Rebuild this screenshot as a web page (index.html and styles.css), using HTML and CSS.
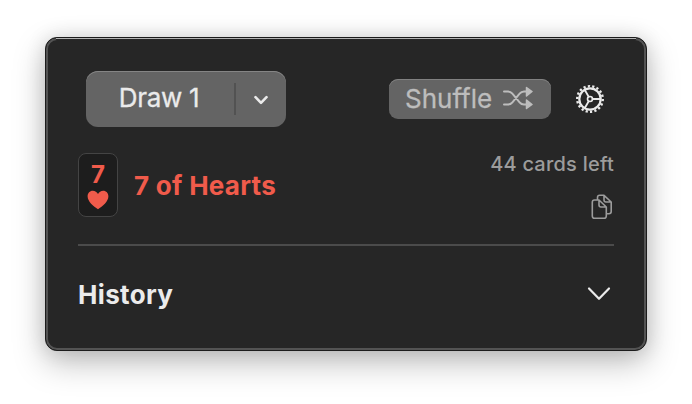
FILE: index.html
```html
<!DOCTYPE html>
<html lang="en">
<head>
<meta charset="utf-8">
<title>Cards</title>
<link rel="stylesheet" href="styles.css">
</head>
<body>
<main class="panel">
  <header class="toolbar">
    <div class="split">
      <button class="draw"><span>Draw 1</span></button>
      <button class="more" aria-label="More">
        <svg width="16" height="12" viewBox="0 0 16 12"><path d="M2.500 3.200 8 8.800l5.500-5.600" stroke-width="2.600"/></svg>
      </button>
    </div>
    <button class="shuffle"><span>Shuffle</span>
      <svg width="30" height="24" viewBox="0 0 30 24"><path d="M1 5.500h4c2 0 3.200.700 4.400 2.200l7.200 8.600c1.200 1.500 2.400 2.200 4.400 2.200h3M1 18.500h4c2 0 3.200-.7 4.400-2.200l7.200-8.600c1.200-1.500 2.400-2.200 4.400-2.200h3" stroke-width="2"/><path class="solid" d="M23.500 1.500 29 5.500 23.500 10zM23.500 14 29 18.500 23.500 22.500z" stroke-width="1.500"/></svg>
    </button>
    <button class="settings" aria-label="Settings">
      <svg width="30" height="30" viewBox="-15 -15 30 30"><circle r="10.700" stroke-width="2.200"/><circle class="teeth" r="12.800" pathLength="36" stroke-width="2.400"/><circle r="2.500" stroke-width="1.600"/><path d="M2.500 0H10M-1.300-2.200-5.200-9M-1.300 2.200-5.200 9" stroke-width="1.800"/></svg>
    </button>
  </header>
  <section class="result">
    <div class="card"><span>7</span>
      <svg width="22" height="20" viewBox="0 0 22 20"><path d="M11 19.300C6.500 16.500.600 11.500.600 6.300.600 3 2.800.700 5.800.700c2.300 0 4.200 1.300 5.200 3.200 1-1.900 2.900-3.200 5.200-3.200 3 0 5.200 2.300 5.200 5.600 0 5.200-5.900 10.200-10.400 13z"/></svg>
    </div>
    <div class="name">7 of Hearts</div>
    <div class="status">
      <div class="left">44 cards left</div>
      <svg width="22" height="26" viewBox="0 0 22 26"><path d="M6.500 5.500V3.500Q6.500 1.300 8.700 1.300H13L20.200 8V17.500Q20.200 19.700 18 19.700H15.500M13 1.300V6Q13 8 15 8H20.200M3.500 6H8L15.300 13V22Q15.300 24.300 13 24.300H3.500Q1.300 24.300 1.300 22V8.200Q1.300 6 3.500 6ZM8 6V11Q8 13 10 13H15.300" stroke-width="1.600"/></svg>
    </div>
  </section>
  <section class="history">
    <h2>History</h2>
    <svg width="24" height="16" viewBox="0 0 24 16"><path d="M2 2.500 12 12.800 22 2.500" stroke-width="2.200"/></svg>
  </section>
</main>
</body>
</html>
```
FILE: styles.css
```css
* { box-sizing: border-box; }
body {
  margin: 0;
  height: 404px;
  padding: 37px 45px;
  background: #fff;
  font-family: Inter, "Liberation Sans", sans-serif;
  color: #ebebeb;
  overflow: hidden;
}
.panel {
  position: relative;
  width: 602px;
  height: 314px;
  padding: 31px 30px 0;
  border: 1px solid #1c1c1c;
  border-radius: 12px;
  background: #262626;
  box-shadow: inset 0 0 0 2px #535353, 0 12px 32px rgba(0,0,0,.25), 0 0 20px rgba(0,0,0,.12);
}
/* highlight along the window's top edge */
.panel::before {
  content: "";
  position: absolute;
  top: 0;
  left: 10px;
  right: 10px;
  height: 2px;
  background: linear-gradient(#b4b4b4 50%, #262626 50%);
}
svg { display: block; fill: none; stroke: currentColor; stroke-linecap: round; stroke-linejoin: round; flex: none; }
button { font: inherit; color: inherit; border: 0; background: none; padding: 0; margin: 0; }
.toolbar { display: flex; align-items: center; height: 60px; padding: 0 11px 0 10px; }
.split {
  display: flex;
  align-items: center;
  width: 200px;
  height: 56px;
  border-radius: 12px;
  background: #646464;
  box-shadow: inset 0 1px 0 #858585;
}
.draw { width: 150px; height: 32px; padding: 0 2px 2px 0; border-right: 2px solid #525252; font-size: 26px; line-height: 30px; letter-spacing: -.3px; -webkit-text-stroke: .3px; }
.more { width: 50px; display: flex; justify-content: center; padding-top: 2px; }
.shuffle {
  display: flex;
  align-items: center;
  gap: 11px;
  width: 162px;
  height: 40px;
  margin-left: auto;
  padding: 0 0 2px 16px;
  border-radius: 9px;
  background: #646464;
  box-shadow: inset 0 1px 0 #818181;
  color: #bdbdbd;
  font-size: 26px;
  -webkit-text-stroke: .3px;
}
.shuffle .solid { fill: currentColor; }
.settings { margin-left: 24px; }
.teeth { stroke-dasharray: 1 1; stroke-linecap: butt; }
.result { display: flex; height: 115px; padding: 24px 2px 0; }
.card {
  display: flex;
  flex-direction: column;
  align-items: center;
  width: 40px;
  height: 64px;
  padding-top: 6px;
  border: 1px solid #444;
  border-radius: 8px;
  background: #1d1d1d;
  color: #f05b4b;
  font-size: 24px;
  font-weight: 700;
  line-height: 30px;
}
.card svg { fill: currentColor; stroke: none; }
.name { margin-left: 16px; color: #f05b4b; font-size: 26px; font-weight: 700; line-height: 66px; letter-spacing: .28px; }
.status { display: flex; flex-direction: column; align-items: flex-end; margin-left: auto; color: #9c9c9c; }
.left { height: 24px; font-size: 20px; font-weight: 500; line-height: 22px; letter-spacing: .22px; }
.status svg { margin: 17px 1px 0 0; }
.history { display: flex; justify-content: space-between; align-items: center; margin: 0 2px; height: 100px; border-top: 2px solid #4b4b4b; }
h2 { margin: 0; font-size: 26px; font-weight: 700; line-height: 32px; letter-spacing: .35px; }
.history svg { margin: 0 3px 2px 0; }
```
